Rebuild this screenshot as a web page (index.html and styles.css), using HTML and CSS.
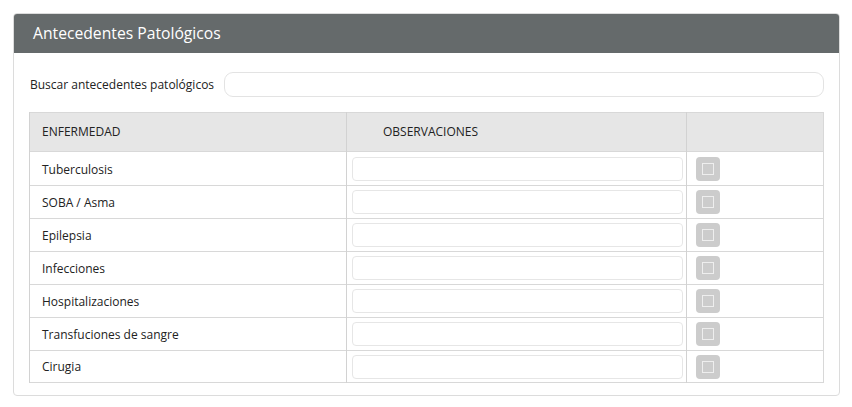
FILE: index.html
```html
<!DOCTYPE html>
<html lang="es">
<head>
<meta charset="utf-8">
<link rel="stylesheet" href="styles.css">
</head>
<body>
<div class="panel">
  <div class="panel-head">Antecedentes Patológicos</div>
  <div class="panel-body">
    <div class="search">
      <label class="search-label">Buscar antecedentes patológicos</label>
      <input class="search-input" type="text">
    </div>
    <table class="grid">
      <thead>
        <tr><th class="c1">ENFERMEDAD</th><th class="c2">OBSERVACIONES</th><th class="c3"></th></tr>
      </thead>
      <tbody>
        <tr class="first"><td class="c1">Tuberculosis</td><td class="c2"><input class="obs" type="text"></td><td class="c3"><span class="chk"><span class="chk-in"></span></span></td></tr>
        <tr><td class="c1">SOBA / Asma</td><td class="c2"><input class="obs" type="text"></td><td class="c3"><span class="chk"><span class="chk-in"></span></span></td></tr>
        <tr><td class="c1">Epilepsia</td><td class="c2"><input class="obs" type="text"></td><td class="c3"><span class="chk"><span class="chk-in"></span></span></td></tr>
        <tr><td class="c1">Infecciones</td><td class="c2"><input class="obs" type="text"></td><td class="c3"><span class="chk"><span class="chk-in"></span></span></td></tr>
        <tr><td class="c1">Hospitalizaciones</td><td class="c2"><input class="obs" type="text"></td><td class="c3"><span class="chk"><span class="chk-in"></span></span></td></tr>
        <tr><td class="c1">Transfuciones de sangre</td><td class="c2"><input class="obs" type="text"></td><td class="c3"><span class="chk"><span class="chk-in"></span></span></td></tr>
        <tr class="last"><td class="c1">Cirugia</td><td class="c2"><input class="obs" type="text"></td><td class="c3"><span class="chk"><span class="chk-in"></span></span></td></tr>
      </tbody>
    </table>
  </div>
</div>
</body>
</html>
```
FILE: styles.css
```css
* { box-sizing: border-box; }
html, body { margin: 0; padding: 0; background: #fff; }
body {
  font-family: "Open Sans", "DejaVu Sans", sans-serif;
  font-size: 12px;
  color: #222;
  padding: 13px 12px 0 13px;
}
.panel {
  width: 827px;
  border: 1px solid #dcdcdc;
  border-radius: 4px;
  overflow: hidden;
}
.panel-head {
  background: #656a6b;
  color: #fff;
  height: 40px;
  margin: -1px -1px 0 -1px;
  padding: 0 0 0 20px;
  display: flex;
  align-items: center;
  font-size: 15.7px;
  border-radius: 4px 4px 0 0;
}
.panel-body {
  padding: 19px 15px 12px 15px;
}
.search {
  display: flex;
  align-items: center;
  gap: 10px;
  height: 25px;
}
.search-label { padding-left: 1px; white-space: nowrap; }
.search-input {
  flex: 1;
  height: 25px;
  border: 1px solid #e3e3e3;
  border-radius: 9px;
  background: #fff;
  outline: none;
}
.grid {
  margin-top: 15px;
  width: 795px;
  border-collapse: collapse;
  border: 1px solid #d8d8d8;
}
.grid th {
  background: #e6e6e6;
  font-weight: normal;
  text-align: left;
  height: 39px;
  padding: 0 12px 2px 12px;
  vertical-align: middle;
  border-left: 1px solid #d2d2d2;
}
.grid th.c2 { padding-left: 36px; }
.grid td {
  height: 33px;
  padding: 0 12px;
  border-top: 1px solid #d8d8d8;
  border-left: 1px solid #d2d2d2;
  vertical-align: middle;
}
.grid tr.first td { height: 34px; padding-top: 1px; }
.grid tr.last td { height: 32px; }
.c1 { width: 317px; }
.c2 { width: 340px; }
.grid td.c2 { padding: 0 3px 0 5px; }
.grid td.c3 { padding: 0 9px; }
.obs {
  display: block;
  width: 100%;
  height: 24px;
  border: 1px solid #e6e6e6;
  border-radius: 4px;
  background: #fff;
  outline: none;
}
.chk {
  display: flex;
  width: 24px;
  height: 24px;
  background: #cccccc;
  border-radius: 4px;
  align-items: center;
  justify-content: center;
}
.chk-in {
  width: 12px;
  height: 12px;
  border: 1px solid #eeeeee;
  background: #cccccc;
}
```
